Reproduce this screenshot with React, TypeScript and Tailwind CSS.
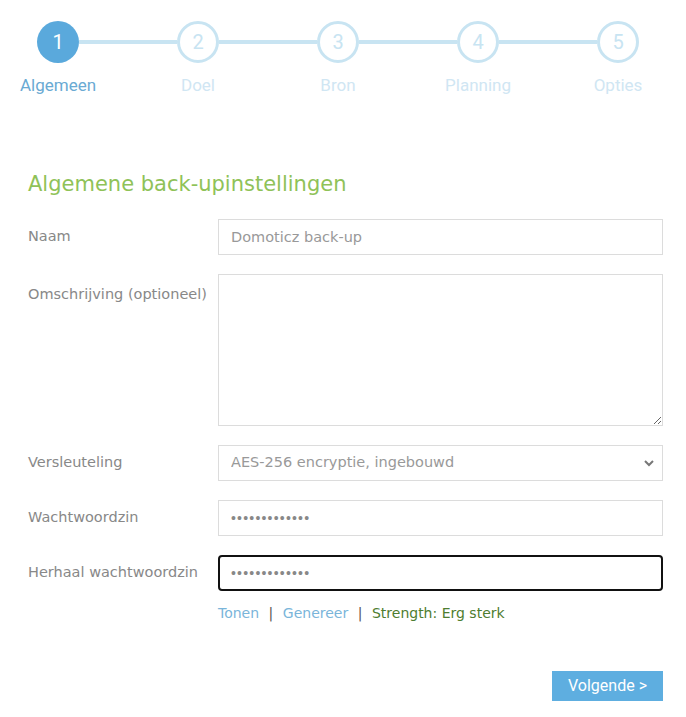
import React from 'react';

const steps = ['Algemeen', 'Doel', 'Bron', 'Planning', 'Opties'];

function Stepper() {
  return (
    <div className="pl-[37px] pr-[47px] pt-[21px]" style={{ fontFamily: 'Roboto, sans-serif' }}>
      <div className="flex items-center">
        {steps.map((s, i) => (
          <React.Fragment key={s}>
            {i > 0 && <div className="flex-1 h-[4px] bg-[#c8e4f2]" />}
            {i === 0 ? (
              <div className="w-[42px] h-[42px] rounded-full bg-[#5aa9dc] flex items-center justify-center text-white text-[20px]">
                1
              </div>
            ) : (
              <div className="w-[42px] h-[42px] rounded-full border-[3px] border-[#c8e4f2] flex items-center justify-center text-[#c8e4f2] text-[20px]">
                {i + 1}
              </div>
            )}
          </React.Fragment>
        ))}
      </div>
      <div className="flex justify-between mt-[10px]">
        {steps.map((s, i) => (
          <div key={s} className="w-[42px] flex justify-center">
            <span className={`whitespace-nowrap text-[17px] ${i === 0 ? 'text-[#6aaad3]' : 'text-[#d0e6f3]'}`}>{s}</span>
          </div>
        ))}
      </div>
    </div>
  );
}

function Row({ label, children, top }: { label: string; children: React.ReactNode; top?: boolean }) {
  return (
    <div className={`flex ${top ? 'items-start' : 'items-center'} mb-[19px]`}>
      <div className={`w-[190px] shrink-0 text-[14.5px] text-[#888] ${top ? 'pt-[10px]' : ''}`}>{label}</div>
      <div className="flex-1">{children}</div>
    </div>
  );
}

const inputCls =
  'w-full h-[36px] border border-[#dcdcdc] bg-white px-[12px] text-[14.5px] text-[#999] outline-none';

const pwFont = { fontFamily: '"Liberation Sans", Arial, sans-serif', letterSpacing: '1.2px' };

export default function App() {
  return (
    <div className="w-[686px] h-[717px] bg-white overflow-hidden" style={{ fontFamily: '"DejaVu Sans", Verdana, sans-serif' }}>
      <Stepper />

      <div className="pl-[28px] pr-[23px]">
        <h2 className="mt-[70px] mb-[19px] text-[21px] text-[#8fc258]">Algemene back-upinstellingen</h2>

        <Row label="Naam">
          <input className={`${inputCls} placeholder-[#999]`} placeholder="Domoticz back-up" />
        </Row>

        <Row label="Omschrijving (optioneel)" top>
          <textarea className="block w-full h-[152px] border border-[#dcdcdc] bg-white px-[12px] py-[8px] text-[14px] outline-none" />
        </Row>

        <Row label="Versleuteling">
          <div className="relative">
            <select className={`${inputCls} appearance-none text-[#888]`} defaultValue="aes">
              <option value="aes">AES-256 encryptie, ingebouwd</option>
            </select>
            <svg
              className="absolute right-[9px] top-[15px] pointer-events-none"
              width="10"
              height="7"
              viewBox="0 0 10 7"
              fill="none"
              stroke="#777"
              strokeWidth="2"
            >
              <path d="M1 1l4 4 4-4" />
            </svg>
          </div>
        </Row>

        <Row label="Wachtwoordzin">
          <input
            type="password"
            className="w-full h-[36px] border border-[#dcdcdc] bg-white px-[12px] text-[14px] text-[#888] outline-none"
            style={pwFont}
            defaultValue="abcdefghijklm"
          />
        </Row>

        <div className="flex items-center">
          <div className="w-[190px] shrink-0 text-[14.5px] text-[#888]">Herhaal wachtwoordzin</div>
          <div className="flex-1">
            <input
              type="password"
              className="w-full h-[36px] border-2 border-[#111] rounded-[4px] bg-white px-[11px] text-[14px] text-[#888] outline-none"
              style={pwFont}
              defaultValue="abcdefghijklm"
            />
          </div>
        </div>

        <div className="pl-[190px] mt-[12px] text-[14px] flex gap-[9.5px]">
          <span className="text-[#7ab5da]">Tonen</span>
          <span className="text-[#555]">|</span>
          <span className="text-[#7ab5da]">Genereer</span>
          <span className="text-[#555]">|</span>
          <span className="text-[#4e7d30]">Strength: Erg sterk</span>
        </div>

        <div className="flex justify-end mt-[47px]">
          <button className="w-[111px] h-[30px] bg-[#5eaee0] text-white text-[16px]" style={{ fontFamily: 'Roboto, sans-serif' }}>
            Volgende &gt;
          </button>
        </div>
      </div>
    </div>
  );
}
